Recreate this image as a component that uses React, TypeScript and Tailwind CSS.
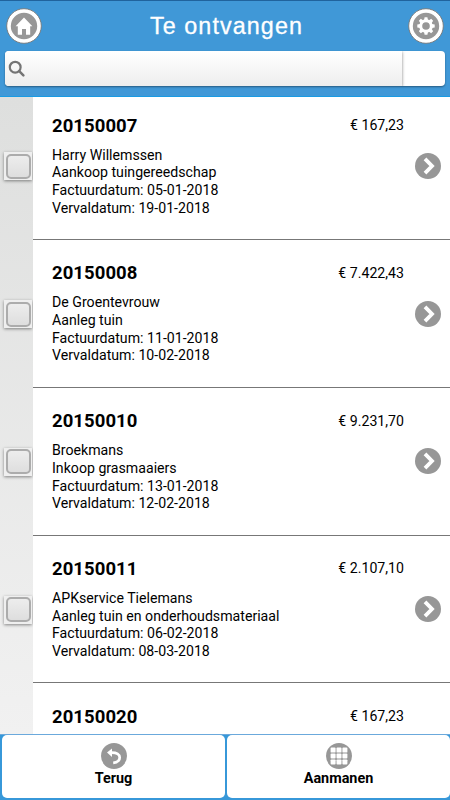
type Invoice = {
  number: string;
  customer: string;
  description: string;
  invoiceDate: string;
  dueDate: string;
  amount: string;
};

const invoices: Invoice[] = [
  { number: '20150007', customer: 'Harry Willemssen', description: 'Aankoop tuingereedschap', invoiceDate: '05-01-2018', dueDate: '19-01-2018', amount: '167,23' },
  { number: '20150008', customer: 'De Groentevrouw', description: 'Aanleg tuin', invoiceDate: '11-01-2018', dueDate: '10-02-2018', amount: '7.422,43' },
  { number: '20150010', customer: 'Broekmans', description: 'Inkoop grasmaaiers', invoiceDate: '13-01-2018', dueDate: '12-02-2018', amount: '9.231,70' },
  { number: '20150011', customer: 'APKservice Tielemans', description: 'Aanleg tuin en onderhoudsmateriaal', invoiceDate: '06-02-2018', dueDate: '08-03-2018', amount: '2.107,10' },
  { number: '20150020', customer: '', description: '', invoiceDate: '', dueDate: '', amount: '167,23' },
];

function HomeIcon() {
  return (
    <svg viewBox="0 0 36 36" className="size-9">
      <circle cx="18" cy="18" r="17.3" fill="#fff" stroke="#777" strokeWidth="0.9" />
      <circle cx="18" cy="18" r="13.2" fill="#979797" />
      <path d="M18 9.6 26.4 18.2H24.2V26.8H20V21H16V26.8H11.8V18.2H9.6Z" fill="#fff" />
    </svg>
  );
}

function GearIcon() {
  return (
    <svg viewBox="0 0 36 36" className="size-9">
      <circle cx="18" cy="18" r="17.3" fill="#fff" stroke="#777" strokeWidth="0.9" />
      <circle cx="18" cy="18" r="13.2" fill="#979797" />
      <circle cx="18" cy="18" r="5.3" fill="none" stroke="#fff" strokeWidth="3" />
      {[0, 45, 90, 135, 180, 225, 270, 315].map((angle) => (
        <path key={angle} d="M16 12.2 16.6 9.3H19.4L20 12.2Z" fill="#fff" transform={`rotate(${angle} 18 18)`} />
      ))}
    </svg>
  );
}

function SearchIcon() {
  return (
    <svg viewBox="0 0 18 18" className="size-[18px]" fill="none" stroke="#757575">
      <circle cx="7.2" cy="7.2" r="5.4" strokeWidth="2.2" />
      <path d="M11.2 11.2 15.4 15.4" strokeWidth="2.5" strokeLinecap="round" />
    </svg>
  );
}

function ArrowIcon() {
  return (
    <svg viewBox="0 0 26 26" className="size-[26px]">
      <circle cx="13" cy="13" r="13" fill="#979797" />
      <path d="M10 5.9 17 13 10 20.1" fill="none" stroke="#fff" strokeWidth="3.8" />
    </svg>
  );
}

function BackIcon() {
  return (
    <svg viewBox="0 0 26 26" className="size-[26px]">
      <circle cx="13" cy="13" r="13" fill="#979797" />
      <path d="M10 9.6C16 9.4 18.7 11.4 18.7 14.6 18.7 17.4 16.4 19.4 12.2 19.8" fill="none" stroke="#fff" strokeWidth="2.7" />
      <path d="M6 9.6 11 5.4V14Z" fill="#fff" />
    </svg>
  );
}

function GridIcon() {
  return (
    <svg viewBox="0 0 26 26" className="size-[26px]">
      <circle cx="13" cy="13" r="13" fill="#979797" />
      {[4.6, 10.5, 16.4].map((y) =>
        [4.6, 10.5, 16.4].map((x) => <rect key={`${x}-${y}`} x={x} y={y} width="5" height="5" rx="0.9" fill="#fff" />)
      )}
    </svg>
  );
}

function InvoiceRow({ invoice }: { invoice: Invoice }) {
  return (
    <li className="flex h-[147.75px] shrink-0">
      <div className="flex w-[33px] items-center justify-end pr-px">
        <button className="flex size-7 items-center justify-center bg-[#efefef] shadow-[0_1px_3px_rgba(0,0,0,0.45)]">
          <span className="size-[25px] rounded-[5px] border-2 border-[#acacac] bg-gradient-to-b from-[#ededed] to-[#dedede]"></span>
        </button>
      </div>

      <div className="flex flex-1 border-b border-[#777] bg-white pl-[19px]">
        <div className="flex-1 pt-[22.2px]">
          <h2 className="text-[18.5px] leading-[22px] font-bold tracking-[0.07px]">{invoice.number}</h2>
          {invoice.customer && (
            <div className="pt-[10px] text-[14.15px] leading-[17.7px]">
              <p>{invoice.customer}</p>
              <p>{invoice.description}</p>
              <p>Factuurdatum: {invoice.invoiceDate}</p>
              <p>Vervaldatum: {invoice.dueDate}</p>
            </div>
          )}
        </div>
        <p className="pt-[22.7px] text-[14.15px] leading-5">€ {invoice.amount}</p>
        <div className="flex w-[46px] items-center justify-center pr-px pl-[3px]">
          <ArrowIcon />
        </div>
      </div>
    </li>
  );
}

export default function App() {
  return (
    <div className="flex h-[800px] w-[450px] flex-col overflow-hidden bg-white font-['Roboto','Liberation_Sans',sans-serif] text-black">
      <header className="h-[97px] shrink-0 border-t border-b border-t-[#20639d] border-b-[#199be3] bg-[#4098d7]">
        <div className="flex h-[50px] items-center justify-between px-[6px]">
          <button><HomeIcon /></button>
          <h1 className="pt-px pl-[3px] font-['Liberation_Sans',Arial,sans-serif] text-[23.3px] tracking-[1.1px] text-white [-webkit-text-stroke:0.3px_white]">Te ontvangen</h1>
          <button><GearIcon /></button>
        </div>
        {/* Search field with the clear area on the right */}
        <div className="mx-[5px] flex h-[35px] overflow-hidden rounded-[4px] bg-white shadow-[0_1px_2px_rgba(0,0,0,0.4)]">
          <div className="flex w-[397px] items-center bg-gradient-to-b from-white to-[#eeeeee] pl-[3px] shadow-[0_1px_3px_rgba(0,0,0,0.5)]">
            <SearchIcon />
          </div>
        </div>
      </header>

      <main className="min-h-0 flex-1 overflow-hidden bg-gradient-to-b from-[#dedfde] to-[#f1f1f1]">
        <ul className="-mt-[4.6px] flex flex-col">
          {invoices.map((invoice) => (
            <InvoiceRow key={invoice.number} invoice={invoice} />
          ))}
        </ul>
      </main>

      <footer className="flex h-[66px] shrink-0 gap-[2px] border-t border-[#6ba9dc] bg-[#3798d9] pb-[2px] pl-[2px]">
        <button className="flex w-[223px] flex-col items-center rounded-[5px] bg-white pt-[8px] text-[14.4px] leading-[20px] font-bold">
          <BackIcon />
          Terug
        </button>
        <button className="flex flex-1 flex-col items-center rounded-[5px] bg-white pt-[8px] text-[14.4px] leading-[20px] font-bold">
          <GridIcon />
          Aanmanen
        </button>
      </footer>
    </div>
  );
}
